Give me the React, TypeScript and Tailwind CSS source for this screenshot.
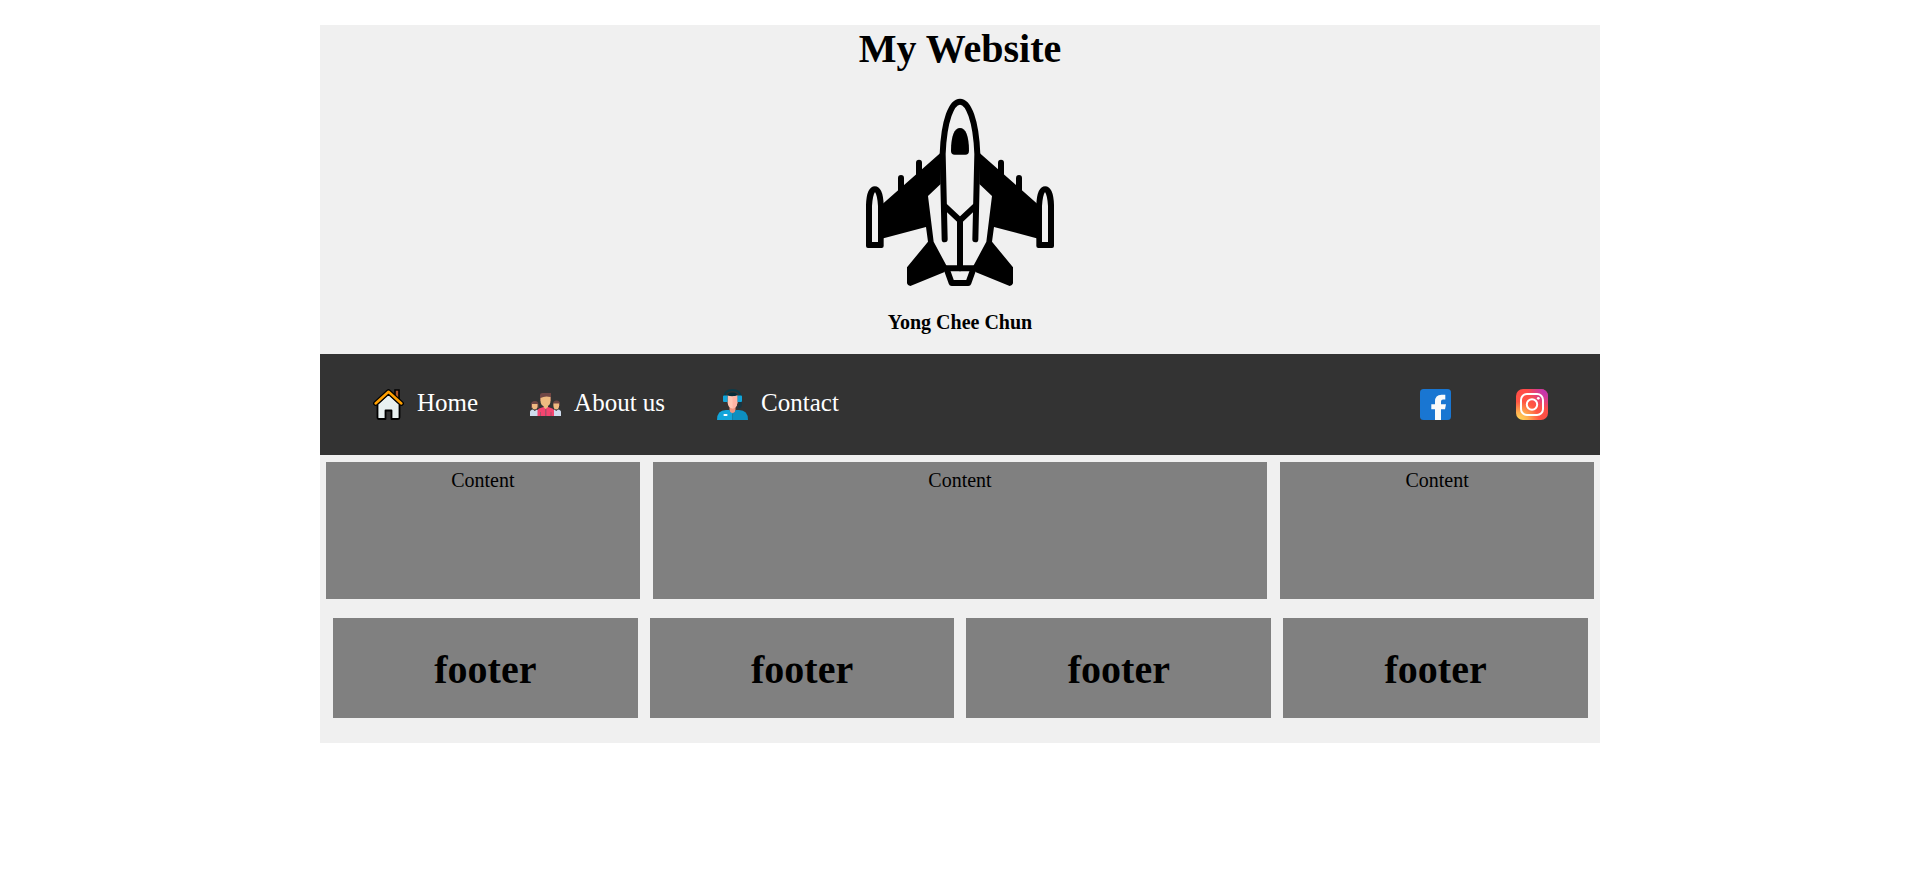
import type { ReactNode } from "react";

function JetHalf() {
  return (
    <>
      <path d="M302 8 L125 164 V266 L258 231 L264 275 L201 352 V400 Q203 408 211 408 L312 367 L322 352 L281 275 L264 138 L302 102 Z" />
      <path d="M183 120 V84 M237 75 V38" stroke="#000" strokeWidth="18" strokeLinecap="round" />
      <path
        fillRule="evenodd"
        d="M78 288 V165 Q80 109 104.500 109 Q129 109 131 165 V288 Q131 294 125 294 H84 Q78 294 78 288 Z M96 276 H114 V168 Q112 136 105 126 Q98 136 96 168 Z"
      />
    </>
  );
}

function JetLogo() {
  return (
    <svg viewBox="78 -156 564 564" className="size-[188px]" role="img" aria-label="Fighter jet">
      <JetHalf />
      <g transform="translate(720 0) scale(-1 1)">
        <JetHalf />
      </g>
      <g fill="none" stroke="#000" strokeWidth="18" strokeLinecap="round">
        <path d="M314 268 L308 12 C312 -90 335 -145 360 -145 C385 -145 408 -90 412 12 L406 268" fill="#f0f0f0" />
        <path d="M316 170 L360 211 L404 170 M360 211 V355" />
        <path d="M312 355 H408" />
        <path d="M321 360 L335 399 H385 L399 360" strokeLinejoin="round" />
      </g>
      <path d="M333 2 C333 -42 343 -66 360 -66 C377 -66 387 -42 387 2 Q387 14 376 14 H344 Q333 14 333 2 Z" />
    </svg>
  );
}

function HomeIcon() {
  return (
    <svg viewBox="0 0 31 31" className="size-[31px]" aria-hidden="true">
      <path d="M22 1 H26 V11 L22 7 Z" fill="#a8542c" stroke="#000" strokeWidth="1.600" />
      <path
        d="M4.500 15 L15.500 5 L26.500 15 V28.500 Q26.500 30 25 30 H18.500 V21.500 H12.500 V30 H6 Q4.500 30 4.500 28.500 Z"
        fill="#e8f0f0"
        stroke="#000"
        strokeWidth="1.800"
        strokeLinejoin="round"
      />
      <path d="M2.500 14.500 L15.500 2.600 L28.500 14.500" fill="none" stroke="#000" strokeWidth="4.800" strokeLinecap="round" strokeLinejoin="round" />
      <path d="M2.600 14.500 L15.500 2.800 L28.400 14.500" fill="none" stroke="#ff9f00" strokeWidth="2.500" strokeLinecap="round" strokeLinejoin="round" />
    </svg>
  );
}

function PeopleIcon() {
  return (
    <svg viewBox="0 0 31 31" className="size-[31px]" aria-hidden="true">
      <path d="M1 16 Q1 12 5 12 Q8.500 12 8.500 16 V19 H1 Z" fill="#704745" />
      <path d="M2 15 H7.500 V18 Q7 20.500 4.700 20.500 Q2.500 20.500 2 18 Z" fill="#f0b980" />
      <path d="M0 27 V23 Q0 21 3 20.500 L4.700 22 L7 20.500 L9 22 V27 Z" fill="#cfdcee" />
      <path d="M23 15 Q23 11.500 26.500 11.500 Q30 11.500 30 15 V17 H23 Z" fill="#704745" />
      <path d="M23.500 14.500 H29 V18 Q28.500 20.500 26.200 20.500 Q24 20.500 23.500 18 Z" fill="#f0b980" />
      <path d="M22 27 V22 L24.500 20.500 L26.200 22 L28 20.500 Q31 21 31 23 V27 Z" fill="#cfdcee" />
      <path d="M10 12 V6 Q10 4 12.500 4 H21 V12 Z" fill="#704745" />
      <path d="M10.500 9 Q15 6.500 20.500 8 V12 Q20.500 17 15.500 17.500 Q10.500 17 10.500 12 Z M13.500 16 H18 V20 H13.500 Z" fill="#efbb80" />
      <path d="M7.500 27 V22 Q7.500 19.500 10.500 19 L13.500 18 L15.500 20 L18 18 L21 19 Q24 19.500 24 22 V27 Z" fill="#f4446f" />
      <path d="M15 20 H16.500 V27 H15 Z M10 23 H11 V27 H10 Z M20.500 23 H21.500 V27 H20.500 Z" fill="#a84f6b" />
    </svg>
  );
}

function ContactIcon() {
  return (
    <svg viewBox="0 0 31 31" className="size-[31px]" aria-hidden="true">
      <path d="M7 8 Q8 1 15.500 1 Q23 1 24 8" fill="none" stroke="#0d3b49" strokeWidth="2" />
      <path d="M10 8 Q10 3.500 15.500 3.500 Q21 3.500 21 8 Z" fill="#062c38" />
      <path d="M23.500 12 V16 Q23.500 18 21 18" fill="none" stroke="#163744" strokeWidth="2.500" />
      <path d="M12.500 16 H18.500 V23 Q15.500 26 12.500 23 Z" fill="#ef9580" />
      <path d="M10.500 6.500 Q15 8 20.500 6.500 V13 Q20 19 15.500 19.500 Q11 19 10.500 13 Z" fill="#ffc7b5" />
      <path d="M15.500 7.500 Q18 7.500 20.500 6.500 V13 Q20 19 15.500 19.500 Z" fill="#ffb5a5" />
      <path d="M6 7.500 Q6 6.500 7 6.500 H10.500 V13 H7 Q6 13 6 12 Z M20.500 6.500 H24 Q25 6.500 25 7.500 V12 Q25 13 24 13 H20.500 Z" fill="#12a5da" />
      <path d="M0 31 Q0 21 9 21 H12.500 Q13 24 15.500 24 V31 Z" fill="#12a5da" />
      <path d="M31 31 Q31 21 22 21 H18.500 Q18 24 15.500 24 V31 Z" fill="#0d8fc0" />
      <rect x="6.500" y="25" width="4" height="2" rx="0.800" fill="#fff" />
    </svg>
  );
}

function FacebookIcon() {
  return (
    <svg viewBox="0 0 31 31" className="size-[31px]" aria-hidden="true">
      <rect width="31" height="31" rx="3.500" fill="#1976d2" />
      <path d="M15 31 V20.300 H11.300 V15.300 H15 V12.500 Q15 5.700 21.500 5.700 H25.300 V10.500 H23 Q21 10.500 21 12.500 V15.300 H26 L25 20.300 H21 V31 Z" fill="#fafafa" />
    </svg>
  );
}

function InstagramIcon() {
  return (
    <svg viewBox="0 0 32 31" className="h-[31px] w-[32px]" aria-hidden="true">
      <defs>
        <radialGradient id="ig-warm" cx="0.120" cy="1" r="1">
          <stop offset="0" stopColor="#ffd858" />
          <stop offset="0.250" stopColor="#ffb050" />
          <stop offset="0.600" stopColor="#ff5544" />
          <stop offset="1" stopColor="#ff4b48" />
        </radialGradient>
        <radialGradient id="ig-cool" cx="1" cy="0" r="0.650">
          <stop offset="0" stopColor="#b832b4" />
          <stop offset="0.300" stopColor="#c837ab" />
          <stop offset="1" stopColor="#c837ab" stopOpacity="0" />
        </radialGradient>
      </defs>
      <rect width="32" height="31" rx="7" fill="url(#ig-warm)" />
      <rect width="32" height="31" rx="7" fill="url(#ig-cool)" />
      <g fill="none" stroke="#fff" strokeWidth="2">
        <rect x="5" y="5" width="22" height="21" rx="6" />
        <circle cx="16" cy="15.500" r="5.200" />
      </g>
      <circle cx="22.300" cy="9.300" r="1.400" fill="#fff" />
    </svg>
  );
}

function NavItem({ icon, label }: { icon: ReactNode; label: string }) {
  return (
    <li>
      <a href="#" className="flex items-start gap-[13px]">
        {icon}
        {label}
      </a>
    </li>
  );
}

const contents = ["left", "main", "right"];
const footers = [1, 2, 3, 4];

export default function App() {
  return (
    <div className="mx-auto mt-[25px] w-2/3 bg-[#f0f0f0] font-['Liberation_Serif',serif] text-xl leading-6 text-black">
      <header className="flex flex-col items-center pb-5">
        <h1 className="text-[40px] leading-[48px] font-bold">My Website</h1>
        <div className="mt-[25px] mb-6">
          <JetLogo />
        </div>
        <h2 className="font-bold">Yong Chee Chun</h2>
      </header>
      <nav className="flex items-center justify-between bg-[#333] py-[35px] pr-[52px] pl-[53px] text-[25px] leading-7 text-white">
        <ul className="flex items-center gap-[52px]">
          <NavItem icon={<HomeIcon />} label="Home" />
          <NavItem icon={<PeopleIcon />} label="About us" />
          <NavItem icon={<ContactIcon />} label="Contact" />
        </ul>
        <ul className="flex items-center gap-[65px]">
          <li>
            <a href="#" aria-label="Facebook" className="block">
              <FacebookIcon />
            </a>
          </li>
          <li>
            <a href="#" aria-label="Instagram" className="block">
              <InstagramIcon />
            </a>
          </li>
        </ul>
      </nav>
      <main className="grid grid-cols-[49fr_96fr_49fr] gap-[13px] px-[6px] pt-[7px]">
        {contents.map((name) => (
          <section key={name} className="min-h-[137px] bg-[#808080] pt-[6px] text-center">
            Content
          </section>
        ))}
      </main>
      <footer className="grid grid-cols-4 gap-3 pt-[19px] pr-3 pb-[25px] pl-[13px]">
        {footers.map((n) => (
          <h2 key={n} className="bg-[#808080] pt-7 pb-6 text-center text-[40px] leading-[48px] font-bold">
            footer
          </h2>
        ))}
      </footer>
    </div>
  );
}
